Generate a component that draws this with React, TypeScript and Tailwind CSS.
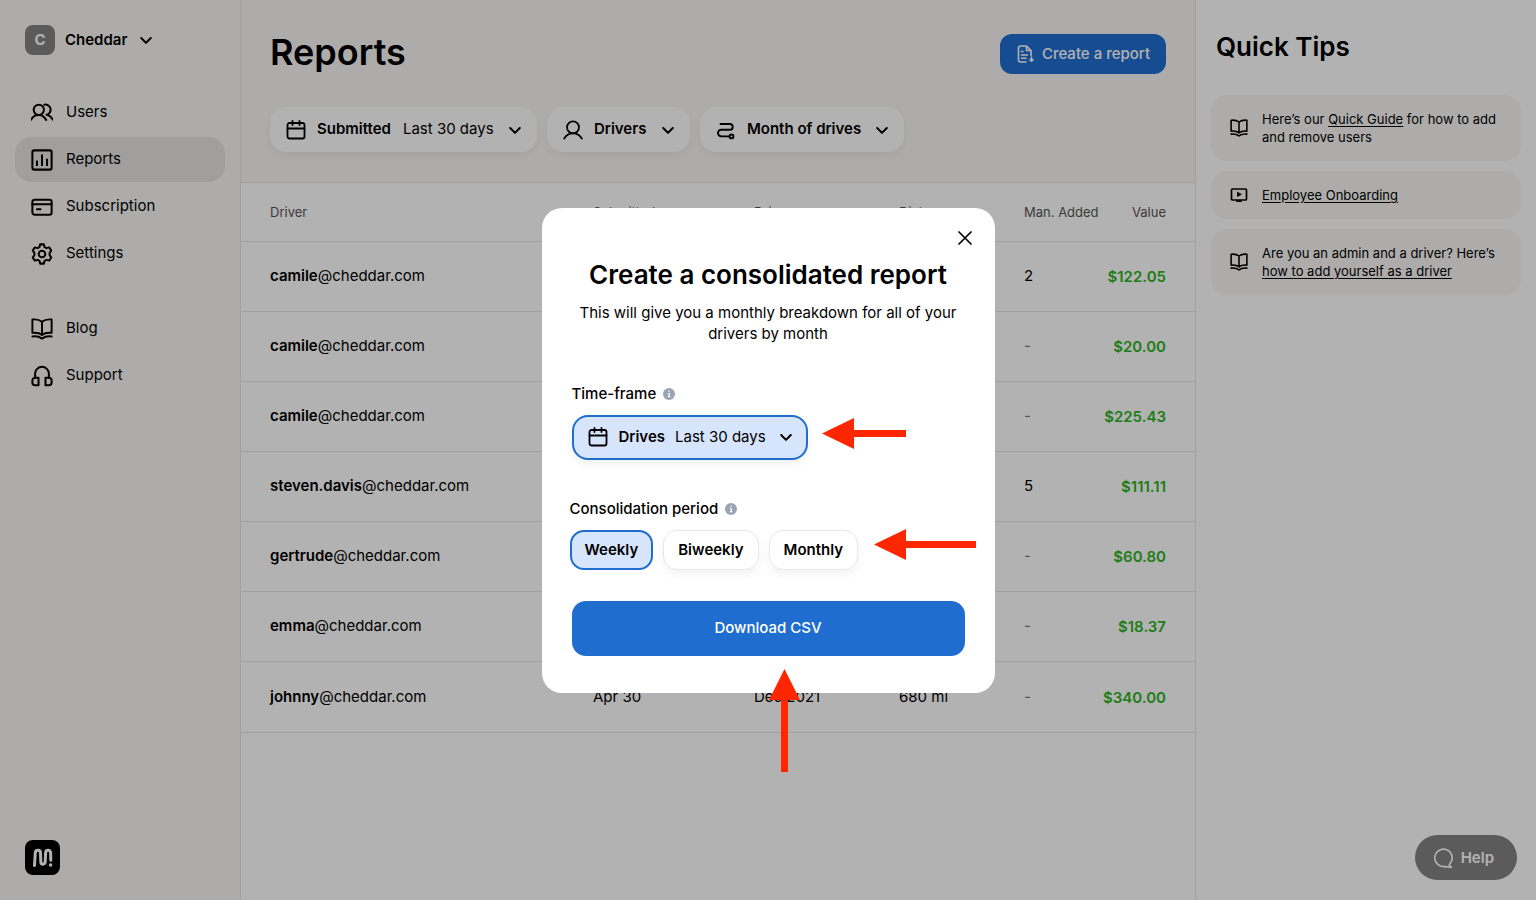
import { useState } from 'react'
import type { ReactNode } from 'react'

type IconProps = { className?: string }

const Svg = ({ className = '', size = 24, width = 2, children }: { className?: string; size?: number; width?: number; children: ReactNode }) => (
  <svg
    viewBox={`0 0 ${size} ${size}`}
    fill="none"
    stroke="currentColor"
    strokeWidth={width}
    strokeLinecap="round"
    strokeLinejoin="round"
    aria-hidden="true"
    className={`shrink-0 ${className}`}
  >
    {children}
  </svg>
)

const UsersIcon = ({ className }: IconProps) => (
  <Svg className={className} width={2.2}>
    <circle cx="8.5" cy="8.500" r="5.6" />
    <path d="M0 19.500c1.500-3 4.500-5.400 8.500-5.400s6 2 8 5.400" />
    <path d="M14.500 3a5.600 5.600 0 1 1 2.500 11M17.500 14.100c2.800.4 5 2.600 6.500 5.400" />
  </Svg>
)

const ReportsIcon = ({ className }: IconProps) => (
  <Svg className={className} width={2.2}>
    <rect x="1.500" y="1.500" width="21" height="21" rx="2" />
    <path d="M6.500 12.500V18.500M12 6V18.500M17.500 10.500V18.500" strokeLinecap="butt" />
  </Svg>
)

const CardIcon = ({ className }: IconProps) => (
  <Svg className={className} width={2.2}>
    <rect x="1.500" y="4" width="21" height="16.500" rx="2.500" />
    <path d="M1.500 9h21M6.500 14.500h4" />
  </Svg>
)

const GearIcon = ({ className }: IconProps) => (
  <Svg className={className} width={2.2}>
    <circle cx="12" cy="12" r="3.600" />
    <path d="M10 1.500h4l.8 3 2 1.100 3-.8 2.300 3.400-1.800 2.600v2.400l1.800 2.600-2.300 3.400-3-.8-2 1.100-.8 3h-4l-.8-3-2-1.100-3 .8-2.300-3.400 1.800-2.600v-2.400L1.900 8.200l2.300-3.400 3 .8 2-1.100z" />
  </Svg>
)

const BookIcon = ({ className }: IconProps) => (
  <Svg className={className} width={2.100}>
    <path d="M12 4C9.500 2 5.500 1.200 1.500 1.600v14.600c4-.4 8 .1 10.500 2.300 2.500-2.200 6.500-2.700 10.500-2.300V1.600c-4-.4-8 .4-10.500 2.400zM12 4v14.500" />
    <path d="M1.500 20.200c4-.6 7-.3 10.500 2.300 3.500-2.600 6.500-2.900 10.500-2.300" />
  </Svg>
)

const HeadphonesIcon = ({ className }: IconProps) => (
  <Svg className={className} width={2.2}>
    <path d="M4.500 14V9.500a7.500 7.500 0 0 1 15 0V14" />
    <path d="M8.200 14H4.500c-1.800 0-3 1.200-3 3v2c0 1.800 1.200 3 3 3h3.700zM15.800 14h3.700c1.800 0 3 1.200 3 3v2c0 1.800-1.200 3-3 3h-3.700z" />
  </Svg>
)

const CalendarIcon = ({ className }: IconProps) => (
  <Svg className={className} size={20} width={1.8}>
    <rect x="1.500" y="3" width="17" height="15.500" rx="2" />
    <path d="M1.500 8.500h17M6.500 1v4M13.500 1v4" />
  </Svg>
)

const PersonIcon = ({ className }: IconProps) => (
  <Svg className={className} size={20} width={1.8}>
    <circle cx="10" cy="7.300" r="6" />
    <path d="M1.200 18.500c1.700-3.300 4.700-5.200 8.800-5.200s7.100 1.900 8.800 5.200" />
  </Svg>
)

const RouteIcon = ({ className }: IconProps) => (
  <Svg className={className} size={20} width={1.9}>
    <path d="M4.500 4h9.300a2.900 2.900 0 0 1 0 5.800H5.300a3.300 3.300 0 0 0 0 6.600h7.200" />
    <circle cx="15.500" cy="16.400" r="1.900" />
  </Svg>
)

const Chevron = ({ className }: IconProps) => (
  <Svg className={`pointer-events-none h-3 w-3 ${className ?? ''}`} size={12}>
    <path d="M1.200 4L6 8.900l4.800-4.900" />
  </Svg>
)

const ReportDownIcon = ({ className }: IconProps) => (
  <Svg className={className} size={18} width={1.600}>
    <path d="M10 17H4.500a2 2 0 0 1-2-2V3a2 2 0 0 1 2-2h6L15 5.500v5M10.500 1v4.500H15" />
    <path d="M5.500 6.500h1.500M5.500 10h6M5.500 13.300h4.500M15.500 12v4" />
    <path d="M13.500 14.700l2 2.200 2-2.200z" fill="currentColor" strokeWidth="0.8" />
  </Svg>
)

const VideoIcon = ({ className }: IconProps) => (
  <Svg className={className} size={18} width={1.700}>
    <rect x="1.500" y="3" width="15" height="11" rx="1" />
    <path d="M7 15.200h4" />
    <path d="M7.500 6.500v4l3.500-2z" fill="currentColor" strokeWidth="0.8" />
  </Svg>
)

const InfoIcon = () => (
  <svg viewBox="0 0 12 12" aria-hidden="true" className="h-3 w-3 shrink-0 text-[#9aa4b3]">
    <circle cx="6" cy="6" r="6" fill="currentColor" />
    <path d="M6 2.700v1.300M5 5.500h1.200v3M4.800 8.700h2.600" fill="none" stroke="#fff" strokeWidth="1.200" />
  </svg>
)

const LogoIcon = () => (
  <svg viewBox="0 0 35 35" aria-hidden="true" className="h-[35px] w-[35px]">
    <rect width="35" height="35" rx="8" fill="#000" />
    <path
      d="M9.500 25.500l.8-12.700a2.600 2.600 0 0 1 5.200 0l.3 9.200a2.200 2.200 0 0 0 4.400 0l.4-9.200a2.500 2.500 0 0 1 5 0l.2 7.500"
      fill="none"
      stroke="#fff"
      strokeWidth="3"
      strokeLinecap="round"
    />
    <circle cx="25.600" cy="25" r="1.700" fill="#fff" />
  </svg>
)

const mainNav = [
  { label: 'Users', icon: UsersIcon },
  { label: 'Reports', icon: ReportsIcon, active: true },
  { label: 'Subscription', icon: CardIcon },
  { label: 'Settings', icon: GearIcon }
]

const helpNav = [
  { label: 'Blog', icon: BookIcon },
  { label: 'Support', icon: HeadphonesIcon }
]

const rows = [
  { name: 'camile', added: '2', value: '$122.05' },
  { name: 'camile', added: '-', value: '$20.00' },
  { name: 'camile', added: '-', value: '$225.43' },
  { name: 'steven.davis', added: '5', value: '$111.11' },
  { name: 'gertrude', added: '-', value: '$60.80' },
  { name: 'emma', added: '-', value: '$18.37' },
  { name: 'johnny', submitted: 'Apr 30', drives: 'Dec 2021', distance: '680 mi', added: '-', value: '$340.00' }
]

const NavList = ({ items }: { items: typeof mainNav }) => (
  <ul className="flex flex-col gap-0.5">
    {items.map(({ label, icon: Icon, active }) => (
      <li key={label}>
        <a
          href="#"
          aria-current={active ? 'page' : undefined}
          className={`flex h-[45px] items-center gap-[13px] rounded-2xl px-4 text-[15px] leading-5 ${active ? 'bg-[#e6e4e1]' : ''}`}
        >
          <Icon className="h-[22px] w-[22px]" />
          <span className="pb-0.5">{label}</span>
        </a>
      </li>
    ))}
  </ul>
)

const Sidebar = () => (
  <aside className="flex w-[241px] shrink-0 flex-col border-r border-[#e5e5e5] bg-[#f8f7f5] px-[15px] py-[25px]">
    <label className="flex h-[30px] items-center px-2.5">
      <span className="flex h-[30px] w-[30px] items-center justify-center rounded-lg bg-[#838383] text-[15px] font-bold text-white">C</span>
      <select aria-label="Workspace" className="ml-2.5 w-[75px] appearance-none text-[15px] leading-5 font-semibold">
        <option>Cheddar</option>
      </select>
      <Chevron />
    </label>
    <nav className="mt-[35px] flex flex-col gap-[30px]">
      <NavList items={mainNav} />
      <NavList items={helpNav} />
    </nav>
    <a href="#" aria-label="Home" className="mt-auto ml-2.5">
      <LogoIcon />
    </a>
  </aside>
)

const Reports = () => (
  <main className="min-w-0 flex-1 bg-white">
    <header className="border-b border-[#e5e5e5] bg-[#f8f7f5] px-[29px] pt-[34px] pb-[30px]">
      <div className="flex h-10 items-center justify-between">
        <h1 className="pb-1 text-[36px] leading-9 font-semibold">Reports</h1>
        <button className="flex h-10 items-center gap-2 rounded-xl bg-[#206dd0] px-4 text-[15px] leading-5 font-medium text-white">
          <ReportDownIcon className="h-[18px] w-[18px]" />
          Create a report
        </button>
      </div>
      <div className="mt-[33px] flex gap-2.5">
        <label className="flex h-[45px] items-center rounded-2xl bg-white px-4 text-[15px] leading-5 shadow-[0_4px_10px_rgba(0,0,0,0.05)]">
          <CalendarIcon className="mr-[11px] h-5 w-5" />
          <span className="pb-0.5 font-semibold">Submitted</span>
          <select className="ml-3 w-[106px] appearance-none pb-0.5">
            <option>Last 30 days</option>
          </select>
          <Chevron />
        </label>
        <label className="flex h-[45px] items-center rounded-2xl bg-white px-4 text-[15px] leading-5 shadow-[0_4px_10px_rgba(0,0,0,0.05)]">
          <PersonIcon className="mr-[11px] h-5 w-5" />
          <select aria-label="Drivers" className="w-[68px] appearance-none pb-0.5 font-semibold">
            <option>Drivers</option>
          </select>
          <Chevron />
        </label>
        <label className="flex h-[45px] items-center rounded-2xl bg-white px-4 text-[15px] leading-5 shadow-[0_4px_10px_rgba(0,0,0,0.05)]">
          <RouteIcon className="mr-[11px] h-5 w-5" />
          <select aria-label="Month of drives" className="w-[129px] appearance-none pb-0.5 font-semibold">
            <option>Month of drives</option>
          </select>
          <Chevron />
        </label>
      </div>
    </header>

    <table className="w-full table-fixed text-left text-[15px] leading-5">
      <colgroup>
        <col className="w-[352px]" />
        <col className="w-[161px]" />
        <col className="w-[145px]" />
        <col className="w-[125px]" />
        <col className="w-[76px]" />
        <col />
      </colgroup>
      <thead>
        <tr className="h-[58px] border-b border-[#e5e5e5] text-[13px] text-[#555] [&>th]:font-normal">
          <th className="pl-[29px]">Driver</th>
          <th>Submitted</th>
          <th>Drives</th>
          <th>Distance</th>
          <th className="whitespace-nowrap">Man. Added</th>
          <th className="pr-[29px] text-right">Value</th>
        </tr>
      </thead>
      <tbody>
        {rows.map((row, i) => (
          <tr key={i} className="h-[70px] border-b border-[#e5e5e5] last:h-[71px]">
            <td className="pl-[29px]">
              <b className="font-semibold">{row.name}</b>@cheddar.com
            </td>
            <td>{row.submitted}</td>
            <td>{row.drives}</td>
            <td>{row.distance}</td>
            <td className={row.added === '-' ? 'text-[#777]' : ''}>{row.added}</td>
            <td className="pt-0.5 pr-[29px] text-right font-semibold text-[#2fb41f]">{row.value}</td>
          </tr>
        ))}
      </tbody>
    </table>
  </main>
)

const QuickTips = () => (
  <aside className="w-[341px] shrink-0 border-l border-[#e5e5e5] bg-white px-[15px] pt-[27px]">
    <h2 className="px-[5px] text-[26px] leading-10 font-semibold">Quick Tips</h2>
    <ul className="mt-7 flex flex-col gap-2.5 text-[13px] leading-[18px] [&>li]:flex [&>li]:items-center [&>li]:gap-3.5 [&>li]:rounded-2xl [&>li]:bg-[#f8f7f5] [&>li]:px-[19px] [&>li]:py-[15px]">
      <li>
        <BookIcon className="h-[18px] w-[18px]" />
        <p>
          Here’s our <a href="#" className="underline underline-offset-2">Quick Guide</a> for how to add
          <br />
          and remove users
        </p>
      </li>
      <li>
        <VideoIcon className="h-[18px] w-[18px]" />
        <a href="#" className="underline underline-offset-2">Employee Onboarding</a>
      </li>
      <li>
        <BookIcon className="h-[18px] w-[18px]" />
        <p>
          Are you an admin and a driver? Here’s
          <br />
          <a href="#" className="underline underline-offset-2">how to add yourself as a driver</a>
        </p>
      </li>
    </ul>
  </aside>
)

const periods = ['Weekly', 'Biweekly', 'Monthly']

const ReportDialog = () => {
  const [period, setPeriod] = useState('Weekly')

  return (
    <div className="fixed inset-0 flex items-center justify-center bg-black/30">
      <div role="dialog" aria-modal="true" aria-labelledby="dialog-title" className="relative w-[453px] rounded-[20px] bg-white pt-[49px] pb-[37px]">
        <button aria-label="Close" className="absolute top-5 right-5 flex h-5 w-5 items-center justify-center">
          <Svg className="h-3.5 w-3.5" size={14} width={1.700}>
            <path d="M1 1l12 12M13 1L1 13" />
          </Svg>
        </button>

        <div className="px-[30px] text-center">
          <h2 id="dialog-title" className="text-[26px] leading-9 font-semibold whitespace-nowrap">Create a consolidated report</h2>
          <p className="mt-[9px] text-[15px] leading-[21px]">
            This will give you a monthly breakdown for all of your
            <br />
            drivers by month
          </p>
        </div>

        <div className="mt-10 px-[30px]">
          <div className="flex items-center gap-[7px] text-[15px] leading-5 font-medium">
            Time-frame
            <InfoIcon />
          </div>
          <label className="mt-[11px] inline-flex h-[45px] items-center rounded-2xl border-2 border-[#206dd0] bg-[#d6e4fc] px-3.5 align-top text-[15px] leading-5 shadow-[0_4px_10px_rgba(0,0,0,0.06)]">
            <CalendarIcon className="mr-[11px] h-5 w-5" />
            <span className="font-semibold">Drives</span>
            <select className="ml-2.5 w-[105px] appearance-none">
              <option>Last 30 days</option>
            </select>
            <Chevron />
          </label>
        </div>

        <fieldset className="mt-[39px] px-7">
          <legend className="flex items-center gap-[7px] text-[15px] leading-5 font-medium">
            Consolidation period
            <InfoIcon />
          </legend>
          <div className="mt-[11px] flex gap-2.5">
            {periods.map((p) => (
              <label
                key={p}
                className={`flex h-10 items-center rounded-[14px] text-[15px] leading-5 font-semibold ${
                  period === p ? 'border-2 border-[#206dd0] bg-[#d6e4fc] px-[13px]' : 'border border-[#e8e8e8] bg-white px-3.5 shadow-[0_4px_10px_rgba(0,0,0,0.05)]'
                }`}
              >
                <input type="radio" name="period" className="sr-only" checked={period === p} onChange={() => setPeriod(p)} />
                {p}
              </label>
            ))}
          </div>
        </fieldset>

        <div className="mt-[31px] px-[30px]">
          <button className="h-[55px] w-full rounded-[14px] bg-[#206dd0] text-[15px] leading-5 font-medium text-white">Download CSV</button>
        </div>

        {/* Pointer arrows */}
        <svg viewBox="0 0 84 31" aria-hidden="true" className="pointer-events-none absolute top-[210px] left-[280px] h-[31px] w-[84px] fill-[#ff2600]">
          <path d="M0 15.500L32 0v12h52v7H32v12z" />
        </svg>
        <svg viewBox="0 0 102 31" aria-hidden="true" className="pointer-events-none absolute top-[321px] left-[332px] h-[31px] w-[102px] fill-[#ff2600]">
          <path d="M0 15.500L32 0v12h70v7H32v12z" />
        </svg>
        <svg viewBox="0 0 31 103" aria-hidden="true" className="pointer-events-none absolute top-[461px] left-[227px] h-[103px] w-[31px] fill-[#ff2600]">
          <path d="M15.500 0L31 31H19v72h-7V31H0z" />
        </svg>
      </div>
    </div>
  )
}

const App = () => (
  <div className="flex min-h-screen font-['Inter',sans-serif] text-black">
    <Sidebar />
    <Reports />
    <QuickTips />
    <button className="fixed right-[19px] bottom-5 flex h-[45px] items-center gap-2 rounded-full bg-[#838383] pr-[23px] pl-[18px] text-[15px] leading-5 font-semibold text-white">
      <Svg className="h-5 w-5" size={20} width={1.600}>
        <path d="M16.200 16.500A8.700 8.700 0 1 0 12.500 18.400c1.800.7 3.700.9 6 .8-1.200-.6-2-1.500-2.300-2.700z" />
      </Svg>
      Help
    </button>
    <ReportDialog />
  </div>
)

export default App
